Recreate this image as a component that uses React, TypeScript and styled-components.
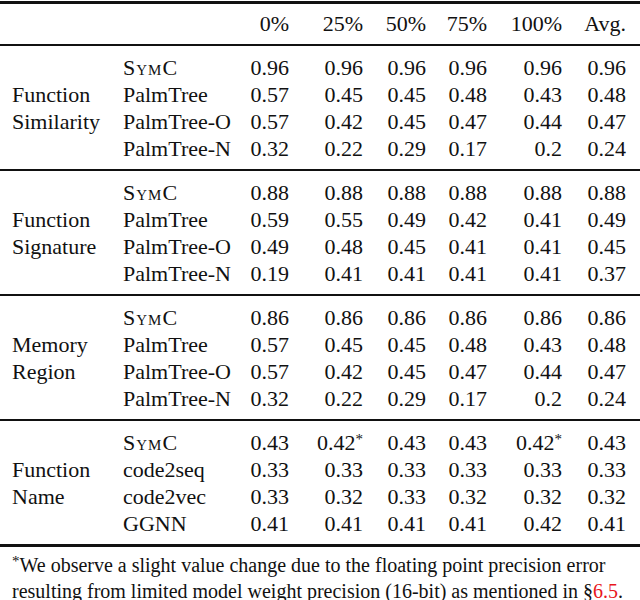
import React from "react";
import styled, { createGlobalStyle } from "styled-components";

const serif = `"Liberation Serif", "Times New Roman", serif`;

const GlobalStyle = createGlobalStyle`
  html, body {
    margin: 0;
    padding: 0;
    background: #fff;
  }
  body {
    font-family: ${serif};
    color: #111;
  }
`;

const Page = styled.div`
  width: 640px;
  padding-top: 1px;
  font-family: ${serif};
`;

const Table = styled.table`
  width: 640px;
  border-collapse: collapse;
  table-layout: fixed;
  font-family: ${serif};
  font-size: 22px;
  color: #111;
  border-top: 3px solid #111;
  border-bottom: 3px solid #111;
`;

const Head = styled.thead`
  th {
    height: 40px;
    padding: 0;
    font-weight: normal;
    text-align: right;
    vertical-align: middle;
  }
`;

const Section = styled.tbody`
  border-top: 2px solid #111;
`;

const Row = styled.tr<{ $edge?: "first" | "last" }>`
  td {
    height: 27px;
    line-height: 27px;
    padding: 0;
    padding-top: ${(p) => (p.$edge === "first" ? "8px" : "0")};
    padding-bottom: ${(p) => (p.$edge === "last" ? "7px" : "0")};
  }
`;

const Label = styled.td`
  && {
    padding: 0 0 0 12px;
    vertical-align: middle;
    line-height: 27px;
  }
`;

const Method = styled.td<{ $caps?: boolean }>`
  padding-left: 6px !important;
  white-space: nowrap;
  font-variant: ${(p) => (p.$caps ? "small-caps" : "normal")};
  letter-spacing: ${(p) => (p.$caps ? "1px" : "0")};
`;

const Num = styled.td`
  text-align: right;
  white-space: nowrap;
`;

const Star = styled.sup`
  font-size: 15px;
  line-height: 0;
  vertical-align: 6px;
`;

const Note = styled.p`
  margin: 5px 0 0;
  padding: 0 2px 0 12px;
  font-family: ${serif};
  font-size: 20px;
  line-height: 26px;
`;

const Ref = styled.span`
  color: #e8161c;
`;

type Block = {
  label: [string, string];
  rows: { name: string; caps?: boolean; values: string[] }[];
};

const blocks: Block[] = [
  {
    label: ["Function", "Similarity"],
    rows: [
      { name: "SymC", caps: true, values: ["0.96", "0.96", "0.96", "0.96", "0.96", "0.96"] },
      { name: "PalmTree", values: ["0.57", "0.45", "0.45", "0.48", "0.43", "0.48"] },
      { name: "PalmTree-O", values: ["0.57", "0.42", "0.45", "0.47", "0.44", "0.47"] },
      { name: "PalmTree-N", values: ["0.32", "0.22", "0.29", "0.17", "0.2", "0.24"] },
    ],
  },
  {
    label: ["Function", "Signature"],
    rows: [
      { name: "SymC", caps: true, values: ["0.88", "0.88", "0.88", "0.88", "0.88", "0.88"] },
      { name: "PalmTree", values: ["0.59", "0.55", "0.49", "0.42", "0.41", "0.49"] },
      { name: "PalmTree-O", values: ["0.49", "0.48", "0.45", "0.41", "0.41", "0.45"] },
      { name: "PalmTree-N", values: ["0.19", "0.41", "0.41", "0.41", "0.41", "0.37"] },
    ],
  },
  {
    label: ["Memory", "Region"],
    rows: [
      { name: "SymC", caps: true, values: ["0.86", "0.86", "0.86", "0.86", "0.86", "0.86"] },
      { name: "PalmTree", values: ["0.57", "0.45", "0.45", "0.48", "0.43", "0.48"] },
      { name: "PalmTree-O", values: ["0.57", "0.42", "0.45", "0.47", "0.44", "0.47"] },
      { name: "PalmTree-N", values: ["0.32", "0.22", "0.29", "0.17", "0.2", "0.24"] },
    ],
  },
  {
    label: ["Function", "Name"],
    rows: [
      { name: "SymC", caps: true, values: ["0.43", "0.42*", "0.43", "0.43", "0.42*", "0.43"] },
      { name: "code2seq", values: ["0.33", "0.33", "0.33", "0.33", "0.33", "0.33"] },
      { name: "code2vec", values: ["0.33", "0.32", "0.33", "0.32", "0.32", "0.32"] },
      { name: "GGNN", values: ["0.41", "0.41", "0.41", "0.41", "0.42", "0.41"] },
    ],
  },
];

const headers = ["0%", "25%", "50%", "75%", "100%", "Avg."];
// column widths chosen so numbers end at the same x as the reference
const widths = [117, 123, 49, 74, 63, 61, 75, 78];

function Value({ v }: { v: string }) {
  if (v.endsWith("*")) {
    return (
      <>
        {v.slice(0, -1)}
        <Star>*</Star>
      </>
    );
  }
  return <>{v}</>;
}

export default function App() {
  return (
    <Page>
      <GlobalStyle />
      <Table>
        <colgroup>
          {widths.map((w, i) => (
            <col key={i} style={{ width: w }} />
          ))}
        </colgroup>
        <Head>
          <tr>
            <th />
            <th />
            {headers.map((h, i) => (
              <th key={h} style={i === headers.length - 1 ? { paddingRight: 14 } : undefined}>
                {h}
              </th>
            ))}
          </tr>
        </Head>
        {blocks.map((b) => (
          <Section key={b.label.join(" ")}>
            {b.rows.map((r, i) => (
              <Row key={r.name} $edge={i === 0 ? "first" : i === b.rows.length - 1 ? "last" : undefined}>
                {i === 0 && (
                  <Label rowSpan={4}>
                    {b.label[0]}
                    <br />
                    {b.label[1]}
                  </Label>
                )}
                <Method $caps={r.caps}>{r.name}</Method>
                {r.values.map((v, j) => (
                  <Num key={j} style={j === r.values.length - 1 ? { paddingRight: 14 } : undefined}>
                    <Value v={v} />
                  </Num>
                ))}
              </Row>
            ))}
          </Section>
        ))}
      </Table>
      <Note>
        <Star>*</Star>We observe a slight value change due to the floating point precision error
        resulting from limited model weight precision (16-bit) as mentioned in §<Ref>6.5</Ref>.
      </Note>
    </Page>
  );
}
